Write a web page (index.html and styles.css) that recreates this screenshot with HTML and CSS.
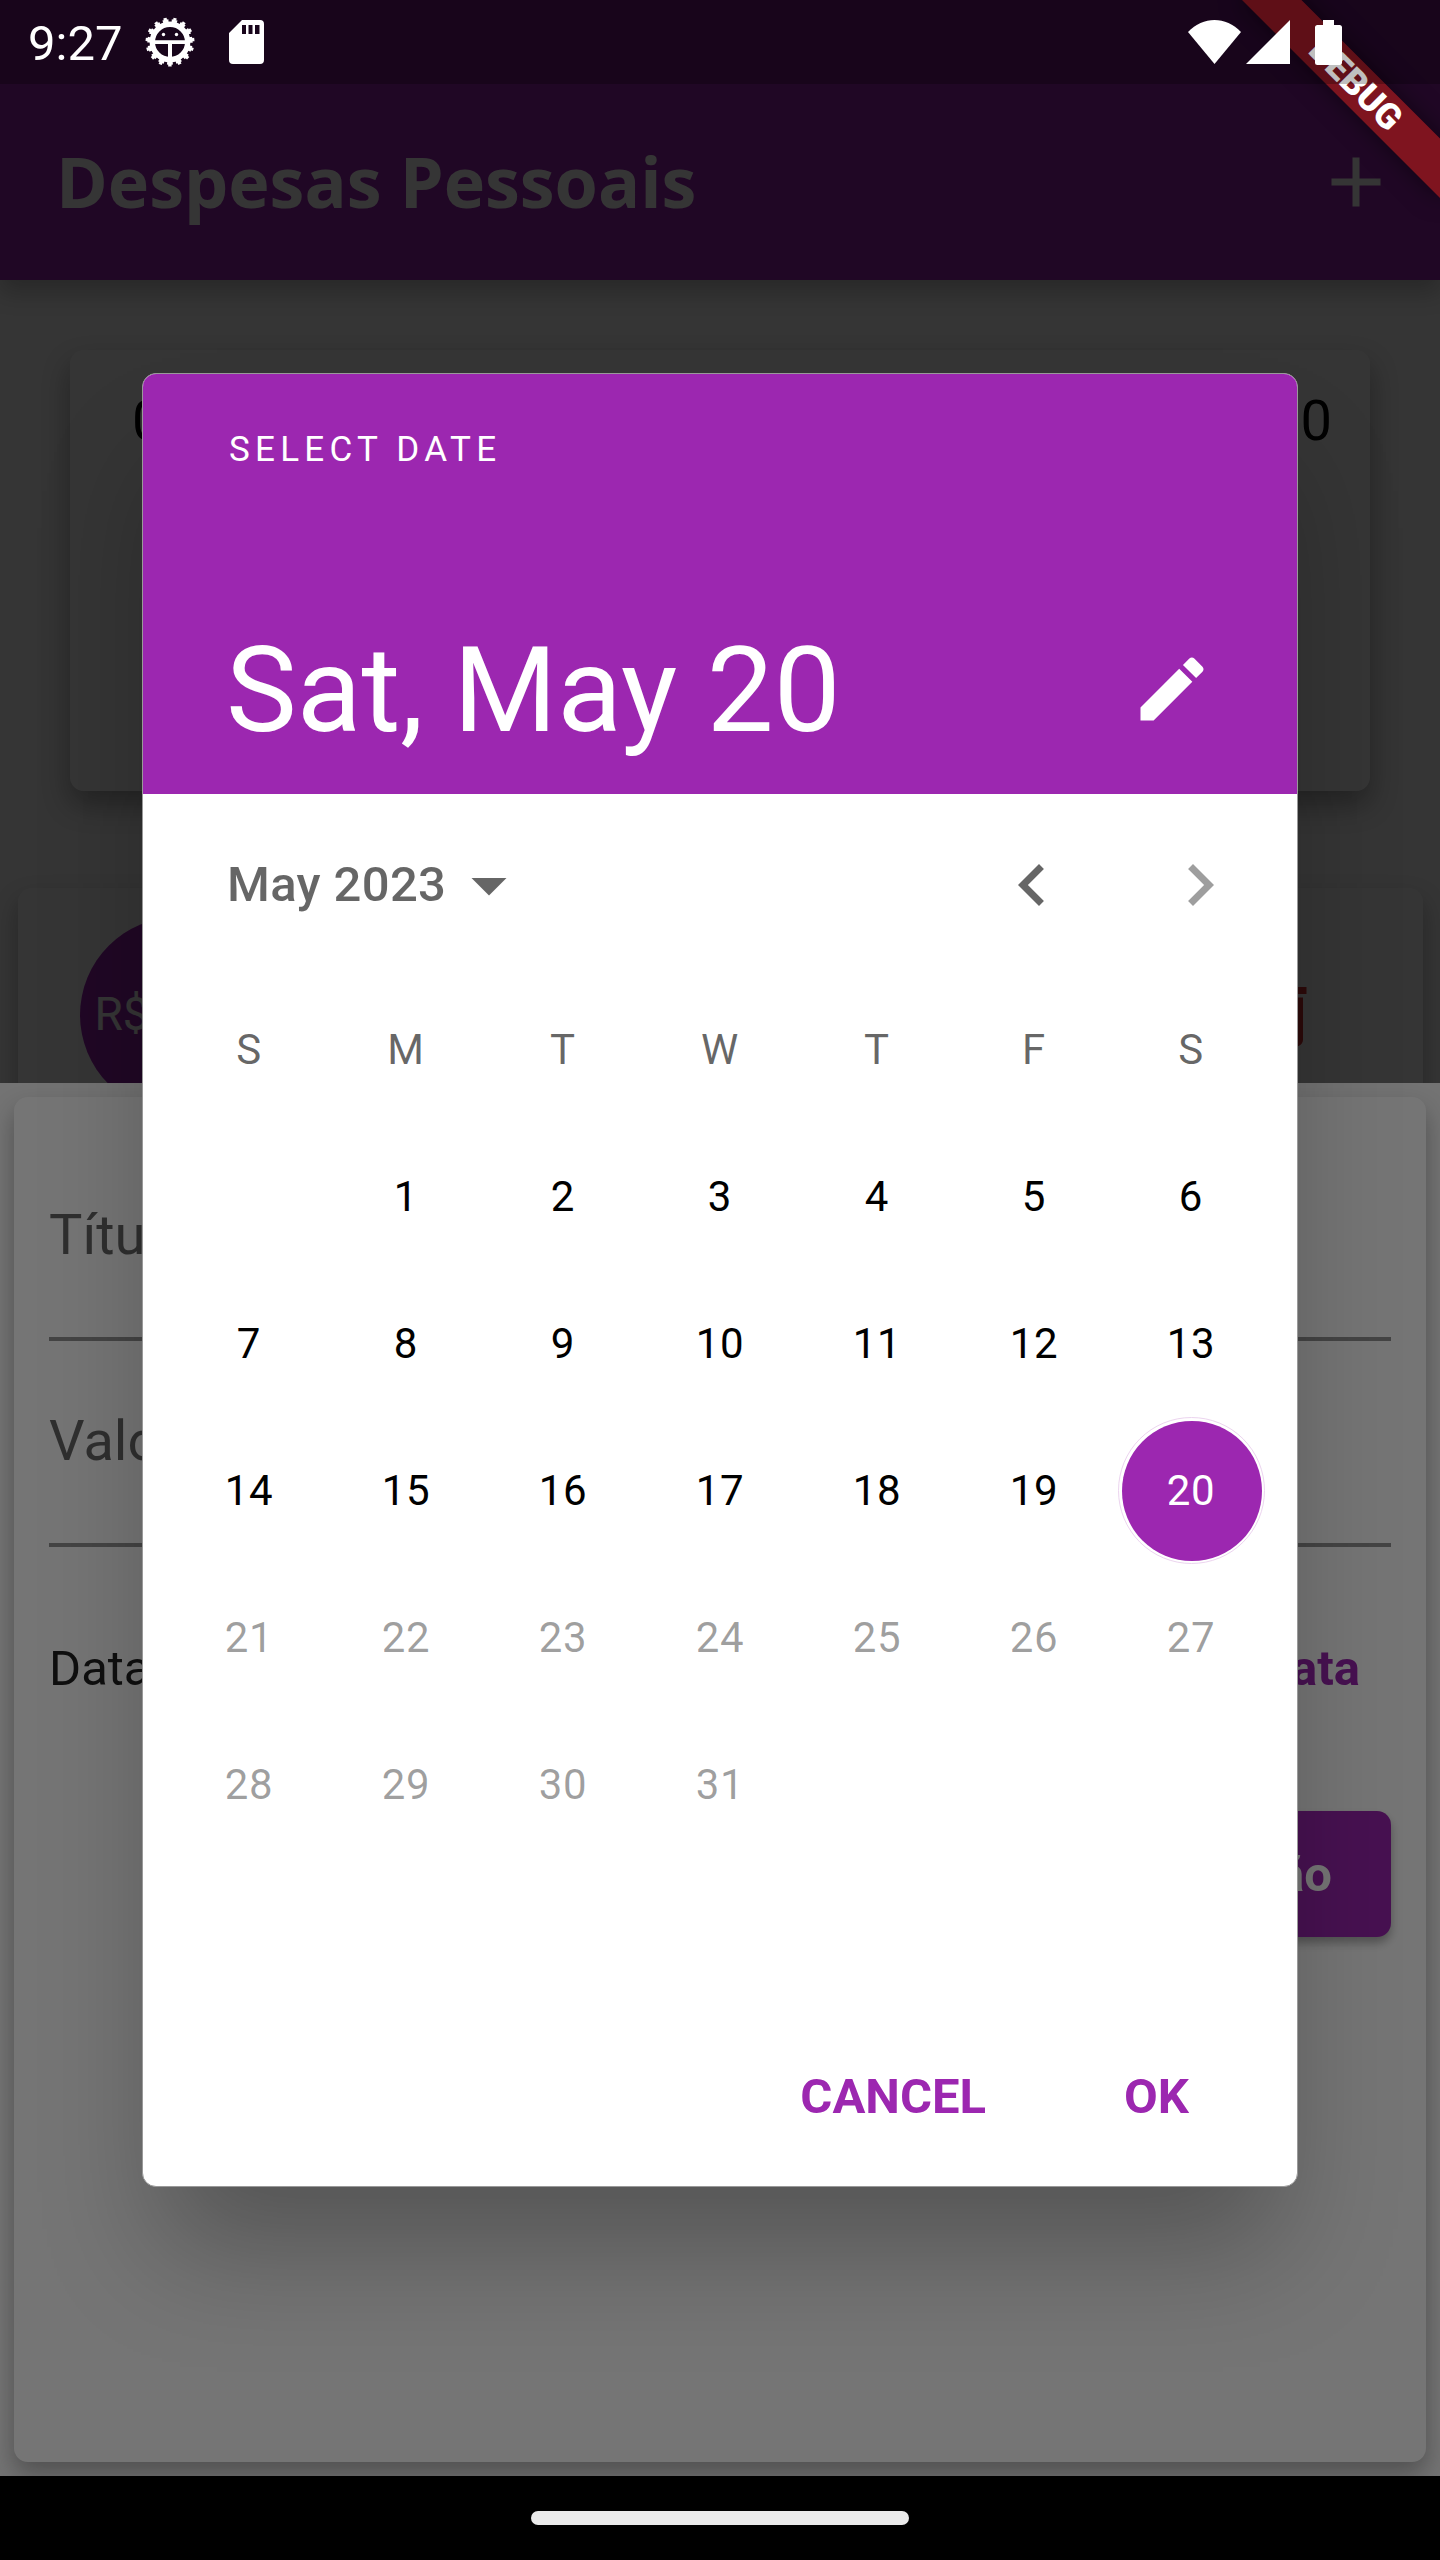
FILE: index.html
```html
<!DOCTYPE html>
<html lang="pt-BR">
<head>
<meta charset="utf-8">
<title>Despesas Pessoais</title>
<link rel="stylesheet" href="styles.css">
</head>
<body>
<div class="phone">
  <main class="app">
    <header class="appbar">
      <h1 class="appbar-title">Despesas Pessoais</h1>
      <svg class="icon" viewBox="0 0 24 24"><path d="M19 13h-6v6h-2v-6H5v-2h6V5h2v6h6v2z"/></svg>
    </header>
    <section class="chart"><span>0</span><span>80</span></section>
    <section class="expense">
      <div class="amount">R$80</div>
      <svg class="icon trash" viewBox="0 0 24 24"><path d="M6 19c0 1.1.9 2 2 2h8c1.1 0 2-.9 2-2V7H6v12zM19 4h-3.500l-1-1h-5l-1 1H5v2h14V4z"/></svg>
    </section>
  </main>
  <div class="scrim"></div>
  <section class="sheet">
    <form class="form">
      <div class="field">Título</div>
      <div class="field">Valor</div>
      <div class="date-row"><span>Data</span><b class="link">Data</b></div>
      <div class="submit">Nova Transação</div>
    </form>
  </section>
  <div class="scrim"></div>

  <section class="dialog">
    <header class="dialog-head">
      <div class="help">SELECT DATE</div>
      <div class="picked">
        <span class="picked-date">Sat, May 20</span>
        <svg class="icon" viewBox="0 0 24 24"><path d="M3 17.250V21h3.750L17.810 9.940l-3.750-3.750L3 17.250zM20.710 7.040c.390-.390.390-1.020 0-1.410l-2.340-2.340c-.390-.390-1.020-.390-1.410 0l-1.830 1.830 3.750 3.750 1.830-1.830z"/></svg>
      </div>
    </header>
    <div class="month">
      <span class="month-name">May 2023</span>
      <svg class="icon" viewBox="0 0 24 24"><path d="M7 10l5 5 5-5z"/></svg>
      <svg class="icon prev" viewBox="0 0 24 24"><path d="M15.410 7.410L14 6l-6 6 6 6 1.410-1.410L10.830 12z"/></svg>
      <svg class="icon next" viewBox="0 0 24 24"><path d="M10 6L8.590 7.410 13.170 12l-4.580 4.590L10 18l6-6z"/></svg>
    </div>
    <div class="grid">
      <span class="dow">S</span><span class="dow">M</span><span class="dow">T</span><span class="dow">W</span><span class="dow">T</span><span class="dow">F</span><span class="dow">S</span>
      <span></span><span>1</span><span>2</span><span>3</span><span>4</span><span>5</span><span>6</span>
      <span>7</span><span>8</span><span>9</span><span>10</span><span>11</span><span>12</span><span>13</span>
      <span>14</span><span>15</span><span>16</span><span>17</span><span>18</span><span>19</span><span class="today">20</span>
      <span class="off">21</span><span class="off">22</span><span class="off">23</span><span class="off">24</span><span class="off">25</span><span class="off">26</span><span class="off">27</span>
      <span class="off">28</span><span class="off">29</span><span class="off">30</span><span class="off">31</span>
    </div>
    <footer class="actions"><span>CANCEL</span><span>OK</span></footer>
  </section>

  <div class="ribbon-clip"><div class="ribbon">DEBUG</div></div>

  <div class="statusbar">
    <span class="clock">9:27</span>
    <svg class="gear" viewBox="0 0 50 50">
      <circle cx="25" cy="25" r="17.700" fill="none" stroke="#fff" stroke-width="5.400"/>
      <g fill="none" stroke="#fff">
        <circle cx="25" cy="25" r="21.200" stroke-width="3" pathLength="150" stroke-dasharray="6.400 3.600" transform="rotate(10.320 25 25)"/>
        <circle cx="25" cy="25" r="23.300" stroke-width="2.400" pathLength="150" stroke-dasharray="3.400 6.600" transform="rotate(13.920 25 25)"/>
      </g>
      <path d="M8 23.200h34v3.800H8zM23 26h4v17h-4z"/>
      <circle cx="18.500" cy="17.500" r="1.700"/><circle cx="31.500" cy="17.500" r="1.700"/>
    </svg>
    <svg class="sd" viewBox="0 0 35 44"><path fill-rule="evenodd" d="M13 0H31a4 4 0 0 1 4 4V40a4 4 0 0 1-4 4H4a4 4 0 0 1-4-4V13zM13 5v9h4V5zM19.500 5v9h4V5zM26 5v9h4.500V5z"/></svg>
    <svg class="wifi" viewBox="0 0 53 44"><path d="M0 12C15-4 38-4 53 12L26.500 44z"/></svg>
    <svg class="signal" viewBox="0 0 44 44"><path d="M0 44L44 0v44z"/></svg>
    <svg class="battery" viewBox="0 0 27 45"><path d="M8 0h11v5h5.500a2.500 2.500 0 0 1 2.500 2.500v35a2.500 2.500 0 0 1-2.500 2.500h-22a2.500 2.500 0 0 1-2.500-2.500v-35a2.500 2.500 0 0 1 2.500-2.500H8z"/></svg>
  </div>
  <div class="navbar"><div class="pill"></div></div>
</div>
</body>
</html>
```

FILE: styles.css
```css
* { box-sizing: border-box; }
body { margin: 0; font-family: Roboto, sans-serif; }
.phone { position: relative; width: 1440px; height: 2560px; overflow: hidden; background: #fafafa; }
.icon { width: 84px; height: 84px; flex: none; fill: currentColor; }

.appbar { height: 280px; padding: 84px 42.5px 0 56px; display: flex; align-items: center; justify-content: space-between; background: #9c27b0; color: #fff; box-shadow: 0 12px 22px rgba(0,0,0,.24); }
.appbar-title { margin: 0 0 3px; font: 700 70px "Open Sans", sans-serif; }
.chart { margin: 70px 70px 0; height: 441px; padding: 38px 38px 0 62px; display: flex; justify-content: space-between; font-size: 56px; line-height: 66px; background: #fff; border-radius: 14px; box-shadow: 0 14px 28px rgba(0,0,0,.32); }
.expense { margin: 97px 17.5px 0; height: 254px; padding: 0 99px 0 62px; display: flex; align-items: center; justify-content: space-between; background: #fff; border-radius: 14px; box-shadow: 0 12px 24px rgba(0,0,0,.28); }
.amount { width: 196px; height: 196px; padding-left: 15px; border-radius: 50%; background: #9c27b0; color: #fff; font-size: 46px; line-height: 195px; }
.trash { color: #d32f2f; }

.scrim { position: absolute; inset: 0; background: rgba(0,0,0,.54); }
.sheet { position: absolute; left: 0; right: 0; top: 1083px; height: 1393px; padding: 14px; background: #fafafa; }
.form { height: 1365px; padding: 35px; display: flex; flex-direction: column; background: #fff; border-radius: 14px; box-shadow: 0 12px 24px rgba(0,0,0,.3); }
.field { height: 206px; padding-top: 67px; border-bottom: 4px solid rgba(0,0,0,.42); font-size: 56px; line-height: 66px; color: rgba(0,0,0,.6); }
.field:first-child { height: 209px; padding-top: 70px; }
.date-row { height: 243px; display: flex; align-items: center; justify-content: space-between; padding-right: 31px; font-size: 49px; color: rgba(0,0,0,.87); }
.link { color: #9c27b0; }
.submit { align-self: flex-end; margin-top: 21px; height: 126px; padding: 0 59px; background: #9c27b0; color: #fff; font-size: 49px; font-weight: 700; line-height: 128px; border-radius: 14px; box-shadow: 0 6px 10px rgba(0,0,0,.3); }

.dialog { position: absolute; left: 142px; top: 373px; width: 1156px; height: 1814px; display: flex; flex-direction: column; background: #fff; border: 1px solid #999; border-radius: 14px; overflow: hidden; box-shadow: 0 80px 110px -20px rgba(0,0,0,.28); }
.dialog-head { height: 419.5px; padding: 55px 83px 0 84px; background: #9c27b0; color: #fff; }
.help { padding-left: 2px; font-size: 35px; line-height: 42px; letter-spacing: 5.25px; }
.picked { margin-top: 148px; display: flex; align-items: center; justify-content: space-between; }
.picked-date { padding-top: 2px; margin-bottom: -2px; margin-left: -1px; font-size: 119px; line-height: 140px; }
.month { height: 182px; padding: 0 55.5px 0 84px; display: flex; align-items: center; color: rgba(0,0,0,.6); }
.month-name { font-size: 49px; font-weight: 500; line-height: 58px; letter-spacing: .35px; margin-right: 1px; }
.prev { margin-left: auto; }
.next { margin-left: 84px; color: rgba(0,0,0,.38); }
.grid { flex: 1; padding: 0 27.5px; display: grid; grid-template-columns: repeat(7, 157px); grid-auto-rows: 147px; align-items: center; justify-items: center; align-content: start; font-size: 42px; letter-spacing: .7px; color: #000; }
.dow { color: rgba(0,0,0,.6); }
.off { color: rgba(0,0,0,.38); }
.today { width: 147px; height: 147px; line-height: 141px; text-align: center; border: 1px solid #ecd4ef; padding: 2.5px; border-radius: 50%; background: #9c27b0; background-clip: content-box; color: #fff; }
.actions { height: 182px; padding: 2px 108px 0 0; display: flex; align-items: center; justify-content: flex-end; gap: 138px; color: #9c27b0; font-size: 49px; font-weight: 700; }

.ribbon-clip { position: absolute; top: 0; right: 0; width: 280px; height: 280px; overflow: hidden; }
.ribbon { position: absolute; left: 140px; top: 98px; width: 280px; height: 42px; transform-origin: 140px -98px; transform: rotate(45deg); background: rgba(183,28,28,.627); color: #fff; font-size: 35.7px; font-weight: 900; line-height: 42px; text-align: center; box-shadow: 0 0 24px rgba(0,0,0,.5); }

.statusbar { position: absolute; left: 0; right: 0; top: 0; height: 84px; padding: 0 98px 0 28px; display: flex; align-items: center; background: rgba(0,0,0,.25); color: #fff; fill: #fff; }
.clock { width: 117px; padding-top: 2px; font-size: 49px; }
.gear { width: 50px; height: 50px; }
.sd { width: 35px; height: 44px; margin-left: 34px; }
.wifi { width: 53px; height: 44px; margin-left: auto; }
.signal { width: 44px; height: 44px; margin-left: 5px; }
.battery { width: 27px; height: 45px; margin-left: 25px; }
.navbar { position: absolute; left: 0; right: 0; bottom: 0; height: 84px; display: flex; align-items: center; justify-content: center; background: #000; }
.pill { width: 378px; height: 14px; border-radius: 7px; background: #ebebeb; }
```
